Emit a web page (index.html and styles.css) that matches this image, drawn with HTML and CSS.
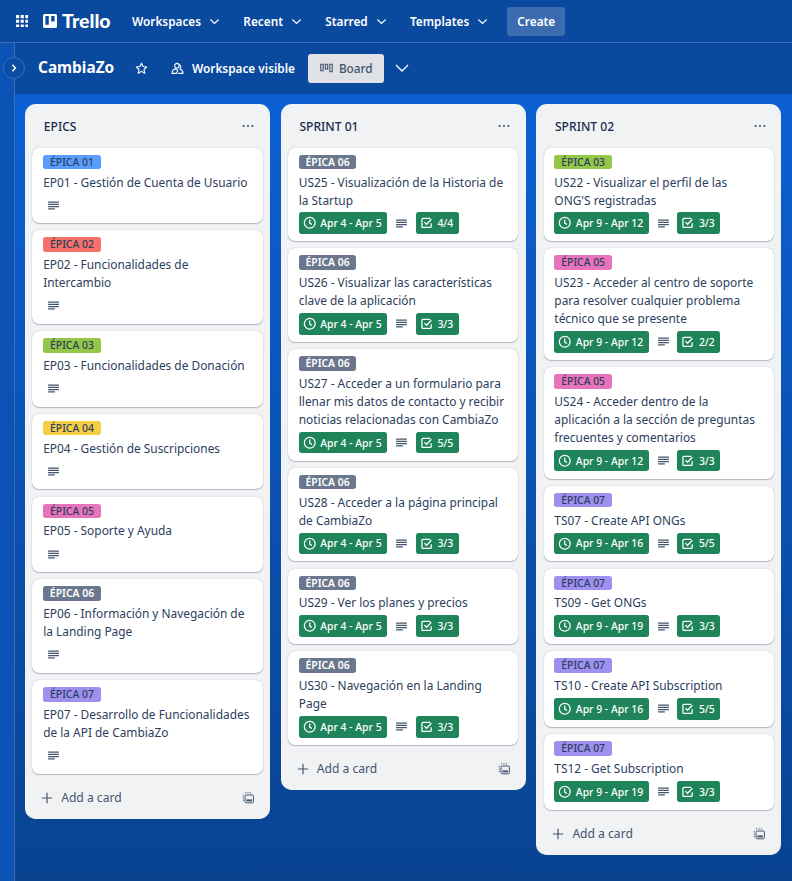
FILE: index.html
```html
<!DOCTYPE html>
<html lang="en">
<head>
    <meta charset="UTF-8">
    <title>CambiaZo | Trello</title>
    <link rel="stylesheet" href="styles.css">
</head>
<body>
    <svg class="sprites" width="0" height="0">
        <symbol id="i-chevron" viewBox="0 0 12 12"><path d="M1.5 3.8 6 8.2l4.5-4.4" fill="none" stroke="currentColor" stroke-width="1.2"/></symbol>
        <symbol id="i-clock" viewBox="0 0 14 14"><circle cx="7" cy="7" r="5.6" fill="none" stroke="currentColor" stroke-width="1.3"/><path d="M7 3.6V7.3l2.3 1.5" fill="none" stroke="currentColor" stroke-width="1.3"/></symbol>
        <symbol id="i-check" viewBox="0 0 14 14"><path d="M11.6 7.4v3.4a1 1 0 0 1-1 1H3a1 1 0 0 1-1-1V3.4a1 1 0 0 1 1-1h7.6" fill="none" stroke="currentColor" stroke-width="1.3"/><path d="m4.6 6.4 2.2 2.2 5-5.2" fill="none" stroke="currentColor" stroke-width="1.3"/></symbol>
        <symbol id="i-desc" viewBox="0 0 12 10"><path d="M0 .5h12v1.4H0zM0 3h12v1.4H0zM0 5.5h12v1.4H0zM0 8h7.5v1.4H0z" fill="currentColor"/></symbol>
        <symbol id="i-plus" viewBox="0 0 12 12"><path d="M6 .8v10.4M.8 6h10.4" fill="none" stroke="currentColor" stroke-width="1.2"/></symbol>
        <symbol id="i-template" viewBox="0 0 12 12"><path d="M.8 3.200h.9M.8 5h.9M.8 6.800h.9M.8 8.600h.9M3 .8h1.200M5.400.8h1.200M7.800.8h1.200" fill="none" stroke="currentColor" stroke-width="1"/><rect x="3" y="3" width="8.400" height="7.800" rx="1.200" fill="none" stroke="currentColor" stroke-width="1"/><path d="M4.400 7.400h5.600v2H4.400z" fill="currentColor"/></symbol>
        <symbol id="i-dots" viewBox="0 0 12 4"><circle cx="1.6" cy="2" r="1.1" fill="currentColor"/><circle cx="6" cy="2" r="1.1" fill="currentColor"/><circle cx="10.4" cy="2" r="1.1" fill="currentColor"/></symbol>
    </svg>

    <header class="topnav">
        <svg class="apps" viewBox="0 0 12 12"><path d="M0 0h3v3H0zM4.500 0h3v3h-3zM9 0h3v3H9zM0 4.500h3v3H0zM4.500 4.500h3v3h-3zM9 4.500h3v3H9zM0 9h3v3H0zM4.500 9h3v3h-3zM9 9h3v3H9z" fill="currentColor"/></svg>
        <div class="brand">
            <svg class="brand__mark" viewBox="0 0 14 14"><path fill-rule="evenodd" d="M1.6 0h10.8A1.6 1.6 0 0 1 14 1.6v10.8a1.6 1.6 0 0 1-1.6 1.6H1.6A1.6 1.6 0 0 1 0 12.400V1.6A1.6 1.6 0 0 1 1.6 0zM2.400 2v8.800h3.400V2zm5.800 0v5.600h3.400V2z" fill="currentColor"/></svg>
            <span class="brand__name">Trello</span>
        </div>
        <nav class="menu">
            <a class="menu__item">Workspaces <svg class="chev"><use href="#i-chevron"/></svg></a>
            <a class="menu__item">Recent <svg class="chev"><use href="#i-chevron"/></svg></a>
            <a class="menu__item">Starred <svg class="chev"><use href="#i-chevron"/></svg></a>
            <a class="menu__item">Templates <svg class="chev"><use href="#i-chevron"/></svg></a>
        </nav>
        <button class="create">Create</button>
    </header>

    <div class="main">
        <aside class="rail">
            <span class="rail__toggle">
                <svg viewBox="0 0 8 10"><path d="M2.400 1.800 5.400 5l-3 3.200" fill="none" stroke="currentColor" stroke-width="1.500"/></svg>
            </span>
        </aside>
        <div class="board">
            <div class="boardbar">
                <h1 class="boardbar__name">CambiaZo</h1>
                <svg class="boardbar__star" viewBox="0 0 14 14"><path d="m7 1.300 1.700 3.600 3.900.5-2.900 2.700.8 3.900L7 10.100l-3.500 1.900.8-3.900-2.900-2.700 3.900-.5z" fill="none" stroke="currentColor" stroke-width="1.200" stroke-linejoin="round"/></svg>
                <div class="boardbar__vis">
                    <svg viewBox="0 0 14 14"><circle cx="6.400" cy="4" r="2.500" fill="none" stroke="currentColor" stroke-width="1.200"/><path d="M1.200 12.200c0-3 1.800-4.600 4-4.800l2 1.600-1.200 3.200zM8.800 3c2 .6 2.200 3.400.8 4.600 2 .6 3.200 2.400 3.200 4.600H7.800" fill="none" stroke="currentColor" stroke-width="1.200"/></svg>
                    <span>Workspace visible</span>
                </div>
                <button class="boardbar__view">
                    <svg viewBox="0 0 14 10"><path d="M.8 1h2.600v7H.8zM5.700 1h2.600v5H5.700zM10.600 1h2.600v8h-2.600z" fill="none" stroke="currentColor" stroke-width="1.200"/></svg>
                    Board
                </button>
                <svg class="boardbar__more" viewBox="0 0 14 14"><path d="M1 4l6 6 6-6" fill="none" stroke="currentColor" stroke-width="1.300"/></svg>
            </div>

            <div class="lists">
                <section class="list">
                    <div class="list__head"><h2>EPICS</h2><svg class="dots"><use href="#i-dots"/></svg></div>
                    <div class="list__cards">
                        <article class="card"><span class="label label_blue">ÉPICA 01</span><p>EP01 - Gestión de Cuenta de Usuario</p><div class="meta"><span class="desc"><svg><use href="#i-desc"/></svg></span></div></article>
                        <article class="card"><span class="label label_red">ÉPICA 02</span><p>EP02 - Funcionalidades de Intercambio</p><div class="meta"><span class="desc"><svg><use href="#i-desc"/></svg></span></div></article>
                        <article class="card"><span class="label label_lime">ÉPICA 03</span><p>EP03 - Funcionalidades de Donación</p><div class="meta"><span class="desc"><svg><use href="#i-desc"/></svg></span></div></article>
                        <article class="card"><span class="label label_yellow">ÉPICA 04</span><p>EP04 - Gestión de Suscripciones</p><div class="meta"><span class="desc"><svg><use href="#i-desc"/></svg></span></div></article>
                        <article class="card"><span class="label label_pink">ÉPICA 05</span><p>EP05 - Soporte y Ayuda</p><div class="meta"><span class="desc"><svg><use href="#i-desc"/></svg></span></div></article>
                        <article class="card"><span class="label label_grey">ÉPICA 06</span><p>EP06 - Información y Navegación de la Landing Page</p><div class="meta"><span class="desc"><svg><use href="#i-desc"/></svg></span></div></article>
                        <article class="card"><span class="label label_purple">ÉPICA 07</span><p>EP07 - Desarrollo de Funcionalidades de la API de CambiaZo</p><div class="meta"><span class="desc"><svg><use href="#i-desc"/></svg></span></div></article>
                    </div>
                    <div class="list__foot"><span class="add"><svg><use href="#i-plus"/></svg>Add a card</span><svg class="tpl"><use href="#i-template"/></svg></div>
                </section>

                <section class="list">
                    <div class="list__head"><h2>SPRINT 01</h2><svg class="dots"><use href="#i-dots"/></svg></div>
                    <div class="list__cards">
                        <article class="card"><span class="label label_grey">ÉPICA 06</span><p>US25 - Visualización de la Historia de la Startup</p><div class="meta"><span class="badge"><svg><use href="#i-clock"/></svg>Apr 4 - Apr 5</span><span class="desc"><svg><use href="#i-desc"/></svg></span><span class="badge"><svg><use href="#i-check"/></svg>4/4</span></div></article>
                        <article class="card"><span class="label label_grey">ÉPICA 06</span><p>US26 - Visualizar las características clave de la aplicación</p><div class="meta"><span class="badge"><svg><use href="#i-clock"/></svg>Apr 4 - Apr 5</span><span class="desc"><svg><use href="#i-desc"/></svg></span><span class="badge"><svg><use href="#i-check"/></svg>3/3</span></div></article>
                        <article class="card"><span class="label label_grey">ÉPICA 06</span><p>US27 - Acceder a un formulario para llenar mis datos de contacto y recibir noticias relacionadas con CambiaZo</p><div class="meta"><span class="badge"><svg><use href="#i-clock"/></svg>Apr 4 - Apr 5</span><span class="desc"><svg><use href="#i-desc"/></svg></span><span class="badge"><svg><use href="#i-check"/></svg>5/5</span></div></article>
                        <article class="card"><span class="label label_grey">ÉPICA 06</span><p>US28 - Acceder a la página principal de CambiaZo</p><div class="meta"><span class="badge"><svg><use href="#i-clock"/></svg>Apr 4 - Apr 5</span><span class="desc"><svg><use href="#i-desc"/></svg></span><span class="badge"><svg><use href="#i-check"/></svg>3/3</span></div></article>
                        <article class="card"><span class="label label_grey">ÉPICA 06</span><p>US29 - Ver los planes y precios</p><div class="meta"><span class="badge"><svg><use href="#i-clock"/></svg>Apr 4 - Apr 5</span><span class="desc"><svg><use href="#i-desc"/></svg></span><span class="badge"><svg><use href="#i-check"/></svg>3/3</span></div></article>
                        <article class="card"><span class="label label_grey">ÉPICA 06</span><p>US30 - Navegación en la Landing Page</p><div class="meta"><span class="badge"><svg><use href="#i-clock"/></svg>Apr 4 - Apr 5</span><span class="desc"><svg><use href="#i-desc"/></svg></span><span class="badge"><svg><use href="#i-check"/></svg>3/3</span></div></article>
                    </div>
                    <div class="list__foot"><span class="add"><svg><use href="#i-plus"/></svg>Add a card</span><svg class="tpl"><use href="#i-template"/></svg></div>
                </section>

                <section class="list">
                    <div class="list__head"><h2>SPRINT 02</h2><svg class="dots"><use href="#i-dots"/></svg></div>
                    <div class="list__cards">
                        <article class="card"><span class="label label_lime">ÉPICA 03</span><p>US22 - Visualizar el perfil de las ONG'S registradas</p><div class="meta"><span class="badge"><svg><use href="#i-clock"/></svg>Apr 9 - Apr 12</span><span class="desc"><svg><use href="#i-desc"/></svg></span><span class="badge"><svg><use href="#i-check"/></svg>3/3</span></div></article>
                        <article class="card"><span class="label label_pink">ÉPICA 05</span><p>US23 - Acceder al centro de soporte para resolver cualquier problema técnico que se presente</p><div class="meta"><span class="badge"><svg><use href="#i-clock"/></svg>Apr 9 - Apr 12</span><span class="desc"><svg><use href="#i-desc"/></svg></span><span class="badge"><svg><use href="#i-check"/></svg>2/2</span></div></article>
                        <article class="card"><span class="label label_pink">ÉPICA 05</span><p>US24 - Acceder dentro de la aplicación a la sección de preguntas frecuentes y comentarios</p><div class="meta"><span class="badge"><svg><use href="#i-clock"/></svg>Apr 9 - Apr 12</span><span class="desc"><svg><use href="#i-desc"/></svg></span><span class="badge"><svg><use href="#i-check"/></svg>3/3</span></div></article>
                        <article class="card"><span class="label label_purple">ÉPICA 07</span><p>TS07 - Create API ONGs</p><div class="meta"><span class="badge"><svg><use href="#i-clock"/></svg>Apr 9 - Apr 16</span><span class="desc"><svg><use href="#i-desc"/></svg></span><span class="badge"><svg><use href="#i-check"/></svg>5/5</span></div></article>
                        <article class="card"><span class="label label_purple">ÉPICA 07</span><p>TS09 - Get ONGs</p><div class="meta"><span class="badge"><svg><use href="#i-clock"/></svg>Apr 9 - Apr 19</span><span class="desc"><svg><use href="#i-desc"/></svg></span><span class="badge"><svg><use href="#i-check"/></svg>3/3</span></div></article>
                        <article class="card"><span class="label label_purple">ÉPICA 07</span><p>TS10 - Create API Subscription</p><div class="meta"><span class="badge"><svg><use href="#i-clock"/></svg>Apr 9 - Apr 16</span><span class="desc"><svg><use href="#i-desc"/></svg></span><span class="badge"><svg><use href="#i-check"/></svg>5/5</span></div></article>
                        <article class="card"><span class="label label_purple">ÉPICA 07</span><p>TS12 - Get Subscription</p><div class="meta"><span class="badge"><svg><use href="#i-clock"/></svg>Apr 9 - Apr 19</span><span class="desc"><svg><use href="#i-desc"/></svg></span><span class="badge"><svg><use href="#i-check"/></svg>3/3</span></div></article>
                    </div>
                    <div class="list__foot"><span class="add"><svg><use href="#i-plus"/></svg>Add a card</span><svg class="tpl"><use href="#i-template"/></svg></div>
                </section>
            </div>
        </div>
    </div>
</body>
</html>
```
FILE: styles.css
```css
* {
    box-sizing: border-box;
}

body {
    margin: 0;
    width: 792px;
    height: 881px;
    overflow: hidden;
    display: flex;
    flex-direction: column;
    font-family: "Noto Sans", sans-serif;
    font-size: 11.9px;
    color: #2c3e5d;
    background: linear-gradient(180deg, #0c66e4 0%, #0c60d4 11%, #094390 100%);
}

.sprites {
    position: absolute;
}

/* top bar */

.topnav {
    flex: none;
    height: 43.2px;
    display: flex;
    align-items: center;
    padding-left: 15.5px;
    color: #fff;
    background: #0a4a9e;
    border-bottom: 1px solid #3d6cb0;
}

.apps {
    width: 12.5px;
    height: 12.5px;
}

.brand {
    display: flex;
    align-items: center;
    margin-left: 15px;
    width: 89px;
}

.brand__mark {
    width: 14px;
    height: 14px;
}

.brand__name {
    margin-left: 5px;
    font-family: "Lato", sans-serif;
    font-weight: 900;
    font-size: 19.5px;
    line-height: 20px;
}

.menu {
    display: flex;
    gap: 23.2px;
}

.menu__item {
    display: flex;
    align-items: center;
    gap: 5px;
    font-size: 11.8px;
    font-weight: 600;
    line-height: 18px;
    white-space: pre;
}

.chev {
    width: 11px;
    height: 11px;
}

.create {
    margin-left: 19px;
    width: 58px;
    height: 29px;
    padding: 0;
    border: 0;
    border-radius: 3px;
    font: 600 11.8px "Noto Sans", sans-serif;
    color: #fff;
    background: #3c6cb0;
}

/* below the top bar */

.main {
    flex: 1;
    min-height: 0;
    display: flex;
}

.rail {
    position: relative;
    flex: none;
    width: 15px;
    background: #0b53b4;
    border-right: 1px solid #3d6cb0;
}

.rail__toggle {
    position: absolute;
    left: 3px;
    top: 14px;
    width: 22px;
    height: 22px;
    display: flex;
    align-items: center;
    justify-content: center;
    color: #fff;
    background: #0b4ca4;
    border: 1px solid #3d6cb0;
    border-radius: 50%;
}

.rail__toggle svg {
    width: 8px;
    height: 10px;
}

.board {
    flex: 1;
    min-width: 0;
}

.boardbar {
    height: 50.4px;
    display: flex;
    align-items: center;
    padding-left: 23px;
    color: #fff;
    background: #0a4a9e;
}

.boardbar__name {
    margin: 0;
    width: 76px;
    font-size: 15.4px;
    font-weight: 700;
    line-height: 20px;
}

.boardbar__star {
    margin-left: 21px;
    width: 13px;
    height: 13px;
}

.boardbar__vis {
    display: flex;
    align-items: center;
    gap: 8px;
    margin-left: 23px;
    font-size: 11.8px;
    font-weight: 600;
}

.boardbar__vis svg {
    width: 13px;
    height: 13px;
}

.boardbar__view {
    display: flex;
    align-items: center;
    gap: 6px;
    margin-left: 13px;
    width: 76px;
    height: 29px;
    padding: 0 0 0 12px;
    border: 0;
    border-radius: 3px;
    font: 500 11.8px "Noto Sans", sans-serif;
    color: #44546f;
    background: #dfe1e6;
}

.boardbar__view svg {
    width: 13px;
    height: 10px;
}

.boardbar__more {
    margin-left: 11px;
    width: 14px;
    height: 14px;
}

/* lists */

.lists {
    display: flex;
    align-items: flex-start;
    gap: 10.8px;
    padding: 10.8px 0 0 10.2px;
}

.list {
    flex: none;
    width: 244.8px;
    background: #f1f2f4;
    border-radius: 10.8px;
}

.list__head {
    height: 43.2px;
    display: flex;
    align-items: center;
    justify-content: space-between;
    padding: 1px 15.5px 0 18.6px;
}

.list__head h2 {
    margin: 0;
    font-size: 12.1px;
    font-weight: 500;
    color: #172b4d;
}

.dots {
    width: 12px;
    height: 4px;
    color: #44546f;
}

.list__cards {
    display: flex;
    flex-direction: column;
    gap: 7.2px;
    padding: 0 7.2px;
}

.list__foot {
    height: 45.4px;
    display: flex;
    align-items: center;
    justify-content: space-between;
    padding: 3px 16px 0 16px;
    color: #44546f;
}

.add {
    display: flex;
    align-items: center;
    gap: 8px;
    font-size: 12.1px;
}

.add svg {
    width: 12px;
    height: 12px;
}

.tpl {
    width: 12px;
    height: 12px;
}

/* cards */

.card {
    padding: 7.2px 10.8px;
    background: #fff;
    border-radius: 7.2px;
    box-shadow: 0 1px 1px #091e4240, 0 0 1px #091e424f;
}

.card p {
    margin: 3.4px 0 0;
    line-height: 18px;
}

.label {
    display: block;
    width: 57.6px;
    height: 14.4px;
    border-radius: 2.7px;
    font-size: 10.4px;
    font-weight: 500;
    line-height: 14.4px;
    text-align: center;
    color: #2c3e5d;
}

.label_blue { background: #579dff; }
.label_red { background: #f87168; }
.label_lime { background: #94c748; }
.label_yellow { background: #f5cd47; }
.label_pink { background: #e774bb; }
.label_purple { background: #9f8fef; }

.label_grey {
    font-weight: 600;
    color: #fff;
    background: #6b778c;
}

.meta {
    display: flex;
    margin-top: 3.8px;
    height: 21.6px;
}

.badge {
    display: flex;
    align-items: center;
    gap: 4px;
    height: 21.6px;
    padding: 0 5.5px 0 4px;
    border-radius: 2.7px;
    font-size: 10.4px;
    font-weight: 500;
    color: #fff;
    background: #1f845a;
}

.badge svg {
    width: 13.5px;
    height: 13.5px;
}

.desc {
    display: flex;
    align-items: center;
    justify-content: center;
    width: 21.6px;
    margin: 0 3.6px;
    color: #44546f;
}

.meta > .desc:first-child {
    margin-left: 0;
}

.desc svg {
    width: 11px;
    height: 9px;
}
```
